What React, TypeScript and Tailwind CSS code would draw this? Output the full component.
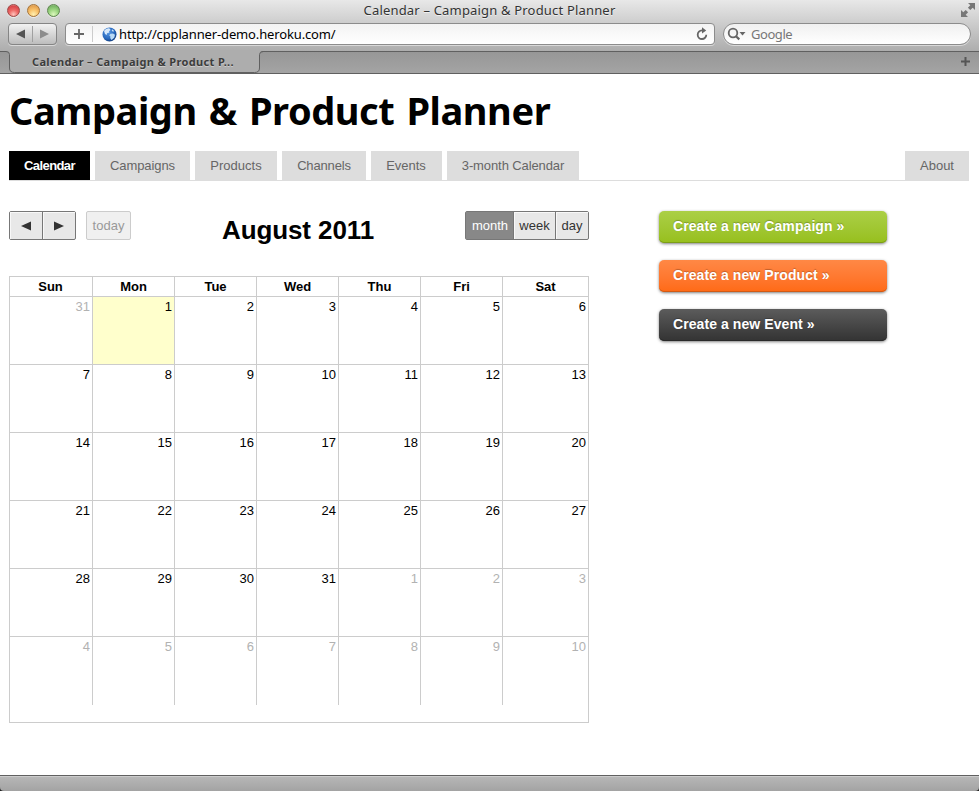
import type { ReactNode } from "react";

const lucida = "font-['Noto_Sans','Open_Sans',sans-serif]";

const days = ["Sun", "Mon", "Tue", "Wed", "Thu", "Fri", "Sat"];

const weeks = [
  [31, 1, 2, 3, 4, 5, 6],
  [7, 8, 9, 10, 11, 12, 13],
  [14, 15, 16, 17, 18, 19, 20],
  [21, 22, 23, 24, 25, 26, 27],
  [28, 29, 30, 31, 1, 2, 3],
  [4, 5, 6, 7, 8, 9, 10],
];

const columns = "grid grid-cols-[83px_82px_82px_82px_82px_82px_86px]";

function isOther(week: number, day: number) {
  return (week === 0 && day === 0) || (week === 4 && day > 3) || week === 5;
}

function Light({ className }: { className: string }) {
  return (
    <span
      className={`h-[13px] w-[13px] rounded-full border shadow-[0_1px_0_rgba(255,255,255,0.6)] ${className}`}
    />
  );
}

function TitleBar() {
  return (
    <div className="relative flex h-[22px] items-center pl-[7px]">
      <div className="mt-[-2px] flex gap-[7px]">
        <Light className="border-[#9c4a48] bg-[radial-gradient(circle_at_50%_85%,#ffc4bd_0,#ee6a67_40%,#d9474a_75%,#f0b4b0_100%)]" />
        <Light className="border-[#a5743a] bg-[radial-gradient(circle_at_50%_85%,#fff0b0_0,#f8c068_45%,#e3a050_78%,#f8e0b8_100%)]" />
        <Light className="border-[#5f8550] bg-[radial-gradient(circle_at_50%_85%,#dcf8bd_0,#9bd580_45%,#78b565_78%,#d0eac4_100%)]" />
      </div>
      <div className="absolute inset-x-0 top-0 text-center text-[13px] leading-[21px] text-[#333] [text-shadow:0_1px_0_rgba(255,255,255,0.6)]">
        <span className="tracking-[0.18px]">Calendar – Campaign &amp; Product Planner</span>
      </div>
      <svg className="absolute top-[3px] right-[4px]" width="14" height="14" viewBox="0 0 14 14" fill="#777">
        <path d="M7 0h7v7l-2.3-2.3-2.4 2.4-2.4-2.4 2.4-2.4z" />
        <path d="M0 7v7h7l-2.3-2.3 2.4-2.4-2.4-2.4-2.4 2.4z" />
      </svg>
    </div>
  );
}

function Globe() {
  return (
    <svg width="15" height="15" viewBox="0 0 15 15">
      <defs>
        <radialGradient id="globe" cx="0.4" cy="0.35" r="0.65">
          <stop offset="0" stopColor="#5d9be4" />
          <stop offset="0.7" stopColor="#2768bd" />
          <stop offset="1" stopColor="#154285" />
        </radialGradient>
      </defs>
      <circle cx="7.5" cy="7.5" r="7" fill="url(#globe)" />
      <path d="M2 4C3.5 1.8 6 1 7.5 1.4L8.6 3 7 4.2 7.4 5.4 5 6.2 4.8 8 3 7z" fill="#d8e9fa" />
      <path d="M8.5 6.8 11 6.4 13 7.8 12.2 10.8 9.5 13 8.2 11 8.4 9.4 7.2 8.2z" fill="#b9daf7" />
      <path d="M10 2.2 12.2 4 11 4.8 9.8 3.8z" fill="#cfe5fa" />
    </svg>
  );
}

function Toolbar() {
  return (
    <div className="flex h-[29px] items-start pt-px pl-[8px]">
      <div className="flex h-[22px] w-[49px] rounded-[4px] border border-[#858585] bg-linear-to-b from-[#f2f2f2] to-[#bdbdbd] shadow-[0_1px_0_rgba(255,255,255,0.5)]">
        <svg width="47" height="20" viewBox="0 0 47 20">
          <path d="M16 5.5v9l-9-4.5z" fill="#555" />
          <path d="M23.5 2v16" stroke="#a0a0a0" />
          <path d="M31 5.5v9l9-4.5z" fill="#8d8d8d" />
        </svg>
      </div>
      <div className="ml-[8px] flex h-[22px] w-[650px] items-center rounded-[4px] border border-[#8c8c8c] bg-linear-to-b from-[#f3f3f3] to-white shadow-[0_1px_0_rgba(255,255,255,0.5)]">
        <svg width="36" height="20" viewBox="0 0 36 20" fill="none">
          <path d="M8 10h10M13 5v10" stroke="#666" strokeWidth="1.8" />
          <path d="M26.5 2v16" stroke="#ccc" />
        </svg>
        <Globe />
        <span className="ml-[2px] text-[13px] leading-5 tracking-[-0.14px] text-black">
          http://cpplanner-demo.heroku.com/
        </span>
        <svg className="mr-[5px] ml-auto" width="14" height="14" viewBox="0 0 14 14">
          <path d="M8 3.4H7A4.3 4.3 0 1 0 11.3 7.7" fill="none" stroke="#666" strokeWidth="1.8" />
          <path d="M7 .2v6.4l4.2-3.2z" fill="#666" />
        </svg>
      </div>
      <div className="ml-[8px] flex h-[22px] w-[248px] items-center rounded-full border border-[#8c8c8c] bg-linear-to-b from-[#f0f0f0] to-white shadow-[0_1px_0_rgba(255,255,255,0.5)]">
        <svg width="24" height="20" viewBox="0 0 24 20">
          <circle cx="9" cy="9" r="4.3" fill="none" stroke="#666" strokeWidth="1.8" />
          <path d="m12 12.2 3.3 3.2" stroke="#666" strokeWidth="2.2" />
          <path d="M15.5 8h6l-3 3.6z" fill="#666" />
        </svg>
        <span className="ml-[3px] text-[13px] leading-5 tracking-[-0.45px] text-[#777]">Google</span>
      </div>
    </div>
  );
}

function TabBar() {
  return (
    <div className="relative flex h-[23px] border-b border-[#606060] bg-linear-to-b from-[#969696] to-[#a4a4a4]">
      <svg className="absolute top-[-1px] left-0" width="270" height="24" viewBox="0 0 270 24">
        <path d="M6 0v1q3.5 0 3.5 3.5V18q0 4.5 5 4.5h240q5 0 5-4.5V4.5q0-3.5 4-3.5V0z" fill="#adadad" />
        <path d="M0 1.5h6q3.5 0 3.5 3V18q0 4.5 5 4.5h240q5 0 5-4.5V4.5q0-3 4-3H270" fill="none" stroke="#606060" />
      </svg>
      <div className="relative w-[259px] pl-[32px] text-[11px] leading-[21px] font-bold text-[#3c3c3c] [text-shadow:0_1px_0_rgba(255,255,255,0.4)]">
        <span className="tracking-[0.35px]">Calendar – Campaign &amp; Product P...</span>
      </div>
      <div className="flex-1 border-t border-[#606060]" />
      <svg className="absolute top-[6px] right-[9px]" width="9" height="9" viewBox="0 0 9 9">
        <path d="M0 4.5h9M4.5 0v9" stroke="#555" strokeWidth="2" />
      </svg>
    </div>
  );
}

function NavTab({ children, className }: { children: ReactNode; className: string }) {
  return (
    <a className={`flex h-[29px] items-center justify-center text-[13px] ${className}`}>{children}</a>
  );
}

function Nav() {
  const idle = "bg-[#ddd] text-[#666]";
  return (
    <nav className="mx-[9px] mt-[14px] mr-[10px] flex h-[30px] gap-[5px] border-b border-[#ddd]">
      <NavTab className="w-[81px] bg-black font-bold tracking-[-0.6px] text-white">Calendar</NavTab>
      <NavTab className={`w-[95px] tracking-[-0.1px] ${idle}`}>Campaigns</NavTab>
      <NavTab className={`w-[82px] ${idle}`}>Products</NavTab>
      <NavTab className={`w-[84px] tracking-[-0.15px] ${idle}`}>Channels</NavTab>
      <NavTab className={`w-[71px] pr-px ${idle}`}>Events</NavTab>
      <NavTab className={`w-[132px] tracking-[-0.1px] ${idle}`}>3-month Calendar</NavTab>
      <NavTab className={`ml-auto w-[64px] ${idle}`}>About</NavTab>
    </nav>
  );
}

function CalendarHeader() {
  const cell = "flex items-center justify-center";
  const raised = "shadow-[inset_1px_1px_0_#f8f8f8]";
  return (
    <div className="flex h-[65px] items-start text-[13px] text-[#333]">
      <div className="flex h-[29px] w-[67px] rounded-[2px] border border-[#777] bg-[#e8e8e8]">
        <div className={`w-[33px] border-r border-[#777] ${raised} ${cell}`}>
          <svg width="10" height="10" viewBox="0 0 10 10">
            <path d="M10 .5v9L0 5z" fill="#333" />
          </svg>
        </div>
        <div className={`w-[32px] ${raised} ${cell}`}>
          <svg width="10" height="10" viewBox="0 0 10 10">
            <path d="M0 .5v9L10 5z" fill="#333" />
          </svg>
        </div>
      </div>
      <div className={`ml-[10px] h-[29px] w-[45px] rounded-[2px] border border-[#ccc] bg-[#f0f0f0] text-[#999] ${cell}`}>
        today
      </div>
      <h2 className="flex-1 text-center text-[26px] leading-[38px] font-bold text-black">
        <span className="tracking-[-0.1px] whitespace-nowrap">August 2011</span>
      </h2>
      <div className="flex h-[29px] w-[124px] rounded-[2px] border border-[#777] bg-[#e8e8e8]">
        <div className={`w-[47px] bg-[#888] pl-px text-white ${cell}`}>month</div>
        <div className={`w-[42px] border-l border-[#777] ${raised} ${cell}`}>week</div>
        <div className={`w-[33px] border-l border-[#777] ${raised} ${cell}`}>day</div>
      </div>
    </div>
  );
}

function Calendar() {
  return (
    <section className="w-[580px]">
      <CalendarHeader />
      <div className="h-[447px] border border-[#ccc] text-[13px] text-black">
        <div className={`-ml-px h-[19px] font-bold ${columns}`}>
          {days.map((name, i) => (
            <div
              key={name}
              className={`text-center leading-[19px] ${i > 0 ? "border-l border-[#ccc]" : ""}`}
            >
              {name}
            </div>
          ))}
        </div>
        {weeks.map((week, w) => (
          <div key={w} className={`-ml-px ${w === 5 ? "h-[69px]" : "h-[68px]"} ${columns}`}>
            {week.map((n, d) => (
              <div
                key={d}
                className={`border-t border-l border-[#ccc] pr-[2px] text-right leading-[20px] ${
                  isOther(w, d) ? "text-[#b2b2b2]" : ""
                } ${w === 0 && d === 1 ? "bg-[#ffffcc]" : ""}`}
              >
                {n}
              </div>
            ))}
          </div>
        ))}
      </div>
    </section>
  );
}

function CreateButton({ label, className }: { label: string; className: string }) {
  return (
    <a
      className={`h-[32px] w-[228px] rounded-[5px] bg-linear-to-b pl-[14px] text-[14px] leading-[31px] font-bold tracking-[0.08px] whitespace-nowrap text-white [text-shadow:0_-1px_1px_rgba(0,0,0,0.25)] ${className}`}
    >
      {label}
    </a>
  );
}

export default function App() {
  return (
    <div className="flex h-[791px] w-[979px] flex-col overflow-hidden bg-white font-['Liberation_Sans',Arial,sans-serif]">
      <header className={lucida}>
        <div className="bg-linear-to-b from-[#e8e8e8] to-[#adadad]">
          <TitleBar />
          <Toolbar />
        </div>
        <TabBar />
      </header>
      <main className="flex-1">
        <h1 className="mt-[13px] h-[50px] pl-[9px] font-['Noto_Sans',sans-serif] text-[38px] leading-[47px] font-bold text-black">
          <span className="tracking-[-0.42px] whitespace-nowrap [word-spacing:2.6px]">
            Campaign &amp; Product Planner
          </span>
        </h1>
        <Nav />
        <div className="mt-[30px] flex pl-[9px]">
          <Calendar />
          <aside className="ml-[70px] flex flex-col gap-[17px]">
            <CreateButton
              label="Create a new Campaign »"
              className="from-[#abcf45] to-[#97bf1c] shadow-[inset_0_-1px_0_#7c9e18,0_1px_3px_rgba(0,0,0,0.5)]"
            />
            <CreateButton
              label="Create a new Product »"
              className="from-[#ff8845] to-[#ff6a14] shadow-[inset_0_-1px_0_#d25a14,0_1px_3px_rgba(0,0,0,0.5)]"
            />
            <CreateButton
              label="Create a new Event »"
              className="from-[#5c5c5c] to-[#333] shadow-[inset_0_-1px_0_#2a2a2a,0_1px_3px_rgba(0,0,0,0.5)]"
            />
          </aside>
        </div>
      </main>
      <footer className="bg-[#222]">
        <div className="h-[16px] rounded-b-[4px] border-t border-[#606060] bg-linear-to-b from-[#b8b8b8] to-[#a3a3a3] shadow-[inset_0_1px_0_#ccc]" />
      </footer>
    </div>
  );
}
